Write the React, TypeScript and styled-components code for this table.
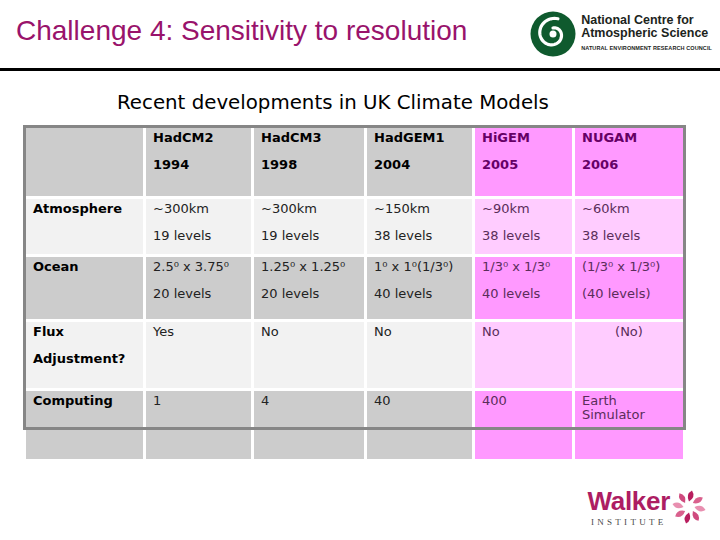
import styled, { createGlobalStyle } from "styled-components";

const GlobalStyle = createGlobalStyle`
  html, body {
    margin: 0;
    padding: 0;
    background: #fff;
  }
  body {
    width: 720px;
    height: 540px;
    overflow: hidden;
  }
`

const Page = styled.div`
  width: 720px;
  height: 540px;
  display: flex;
  flex-direction: column;
  background: #fff;
`

const Header = styled.div`
  height: 68px;
  display: flex;
  justify-content: space-between;
  align-items: flex-start;
`

const Title = styled.h1`
  margin: 0;
  padding: 15px 0 0 16px;
  font-family: "Liberation Sans", Arial, sans-serif;
  font-weight: 400;
  font-size: 28px;
  line-height: 32px;
  color: #99136b;
`

const NcasLogo = styled.div`
  display: flex;
  align-items: flex-start;
  gap: 5px;
  margin: 11px 8px 0 0;
`

const NcasText = styled.div`
  display: flex;
  flex-direction: column;
  padding-top: 3px;
  font-family: "Liberation Sans", Arial, sans-serif;
  color: #1c241c;
`

const NcasName = styled.span`
  font-weight: 700;
  font-size: 12.5px;
  line-height: 13px;
`

const NcasCouncil = styled.span`
  margin-top: 5px;
  font-weight: 700;
  font-size: 5.5px;
  line-height: 7px;
  letter-spacing: 0.1px;
  white-space: nowrap;
`

const Rule = styled.div`
  height: 3px;
  background: #000;
`

const Subtitle = styled.h2`
  margin: 20px 0 0 117px;
  font-family: "DejaVu Sans", Verdana, sans-serif;
  font-weight: 400;
  font-size: 19.8px;
  line-height: 24px;
  color: #000;
`

const Frame = styled.div`
  margin: 10px 0 0 23px;
  width: fit-content;
  border: 3px solid #868686;
  display: flex;
  flex-direction: column;
  gap: 3px;
  background: #fff;
`

const Row = styled.div<{ $h: number }>`
  display: grid;
  grid-template-columns: 117px 105px 110px 105px 97px 108px;
  gap: 3px;
  height: ${(p) => p.$h}px;
`

const ExtraRow = styled(Row)`
  margin-left: 26px;
`

const Cell = styled.div<{ $bg: string; $color: string; $bold?: boolean; $center?: boolean; $tight?: boolean }>`
  background: ${(p) => p.$bg};
  color: ${(p) => p.$color};
  font-family: "DejaVu Sans", Verdana, sans-serif;
  font-size: 13px;
  font-weight: ${(p) => (p.$bold ? 700 : 400)};
  line-height: ${(p) => (p.$tight ? "14px" : "20px")};
  padding: ${(p) => (p.$tight ? "3px" : "0")} 7px 0 7px;
  display: flex;
  flex-direction: column;
  gap: ${(p) => (p.$tight ? "0" : "7px")};
  text-align: ${(p) => (p.$center ? "center" : "left")};
  white-space: nowrap;
`

const Footer = styled.div`
  margin-top: 28px;
  display: flex;
  justify-content: flex-end;
  padding-right: 14px;
`

const WalkerLogo = styled.div`
  display: flex;
  align-items: center;
  gap: 2px;
`

const WalkerText = styled.div`
  display: flex;
  flex-direction: column;
  align-items: center;
`

const WalkerName = styled.span`
  font-family: "Liberation Sans", Arial, sans-serif;
  font-weight: 700;
  font-size: 26px;
  line-height: 29px;
  color: #ad1d63;
  letter-spacing: -0.3px;
`

const WalkerSub = styled.span`
  font-family: "Liberation Serif", "Times New Roman", serif;
  font-size: 9px;
  line-height: 10px;
  letter-spacing: 3.3px;
  color: #4a4a4a;
  margin-top: 1px;
`

const palette = {
  grey: { dark: "#cccccc", light: "#f2f2f2", head: "#000", text: "#222" },
  pink: { dark: "#ff99ff", light: "#ffccff", head: "#660066", text: "#5a2d5a" },
}

type Tone = "dark" | "light"
type CellData = { lines: string[]; center?: boolean; tight?: boolean }

const columnTones: ("grey" | "pink")[] = ["grey", "grey", "grey", "grey", "pink", "pink"]

const rows: { tone: Tone; h: number; bold?: boolean; cells: CellData[] }[] = [
  {
    tone: "dark", h: 68, bold: true,
    cells: [
      { lines: [] },
      { lines: ["HadCM2", "1994"] },
      { lines: ["HadCM3", "1998"] },
      { lines: ["HadGEM1", "2004"] },
      { lines: ["HiGEM", "2005"] },
      { lines: ["NUGAM", "2006"] },
    ],
  },
  {
    tone: "light", h: 55,
    cells: [
      { lines: ["Atmosphere"] },
      { lines: ["~300km", "19 levels"] },
      { lines: ["~300km", "19 levels"] },
      { lines: ["~150km", "38 levels"] },
      { lines: ["~90km", "38 levels"] },
      { lines: ["~60km", "38 levels"] },
    ],
  },
  {
    tone: "dark", h: 62,
    cells: [
      { lines: ["Ocean"] },
      { lines: ["2.5\u2070 x 3.75\u2070", "20 levels"] },
      { lines: ["1.25\u2070 x 1.25\u2070", "20 levels"] },
      { lines: ["1\u2070 x 1\u2070(1/3\u2070)", "40 levels"] },
      { lines: ["1/3\u2070 x 1/3\u2070", "40 levels"] },
      { lines: ["(1/3\u2070 x 1/3\u2070)", "(40 levels)"] },
    ],
  },
  {
    tone: "light", h: 66,
    cells: [
      { lines: ["Flux", "Adjustment?"] },
      { lines: ["Yes"] },
      { lines: ["No"] },
      { lines: ["No"] },
      { lines: ["No"] },
      { lines: ["(No)"], center: true },
    ],
  },
  {
    tone: "dark", h: 36,
    cells: [
      { lines: ["Computing"] },
      { lines: ["1"] },
      { lines: ["4"] },
      { lines: ["40"] },
      { lines: ["400"] },
      { lines: ["Earth", "Simulator"], tight: true },
    ],
  },
]

// spiral for the NCAS mark
const spiralPoints = Array.from({ length: 60 }, (_, i) => {
  const t = i / 59
  const a = -Math.PI / 2 + t * Math.PI * 2.1
  const r = 6 + t * 10
  return `${(23 + r * Math.cos(a)).toFixed(2)},${(23 + r * Math.sin(a)).toFixed(2)}`
}).join(" ")

const NcasMark = () => (
  <svg width="46" height="46" viewBox="0 0 46 46">
    <circle cx="23" cy="23" r="22.5" fill="#0f5a2e" />
    <polyline points={spiralPoints} fill="none" stroke="#fff" strokeWidth="3.2" strokeLinecap="round" />
    <circle cx="23" cy="23" r="3.5" fill="#fff" />
  </svg>
)

const petalColors = ["#b81d5e", "#d9608d", "#e88fb0", "#cf4a7e"]

const WalkerFlower = () => (
  <svg width="34" height="36" viewBox="0 0 34 36">
    {Array.from({ length: 8 }, (_, i) => (
      <path
        key={i}
        d="M17 12.5 Q24 8 20 1.5 Q13.5 5 17 12.5 Z"
        fill={petalColors[i % petalColors.length]}
        transform={`rotate(${i * 45} 17 18)`}
      />
    ))}
  </svg>
)

export default function App() {
  return (
    <Page>
      <GlobalStyle />
      <Header>
        <Title>Challenge 4: Sensitivity to resolution</Title>
        <NcasLogo>
          <NcasMark />
          <NcasText>
            <NcasName>National Centre for</NcasName>
            <NcasName>Atmospheric Science</NcasName>
            <NcasCouncil>NATURAL ENVIRONMENT RESEARCH COUNCIL</NcasCouncil>
          </NcasText>
        </NcasLogo>
      </Header>
      <Rule />
      <Subtitle>Recent developments in UK Climate Models</Subtitle>
      <Frame>
        {rows.map((row, ri) => (
          <Row key={ri} $h={row.h}>
            {row.cells.map((cell, ci) => {
              const tone = palette[columnTones[ci]]
              const bold = row.bold || ci === 0
              return (
                <Cell
                  key={ci}
                  $bg={tone[row.tone]}
                  $color={bold ? tone.head : tone.text}
                  $bold={bold}
                  $center={cell.center}
                  $tight={cell.tight}
                >
                  {cell.lines.map((line, li) => (
                    <span key={li}>{line}</span>
                  ))}
                </Cell>
              )
            })}
          </Row>
        ))}
      </Frame>
      <ExtraRow $h={29}>
        {columnTones.map((t, i) => (
          <Cell key={i} $bg={palette[t].dark} $color={palette[t].text} />
        ))}
      </ExtraRow>
      <Footer>
        <WalkerLogo>
          <WalkerText>
            <WalkerName>Walker</WalkerName>
            <WalkerSub>INSTITUTE</WalkerSub>
          </WalkerText>
          <WalkerFlower />
        </WalkerLogo>
      </Footer>
    </Page>
  )
}
